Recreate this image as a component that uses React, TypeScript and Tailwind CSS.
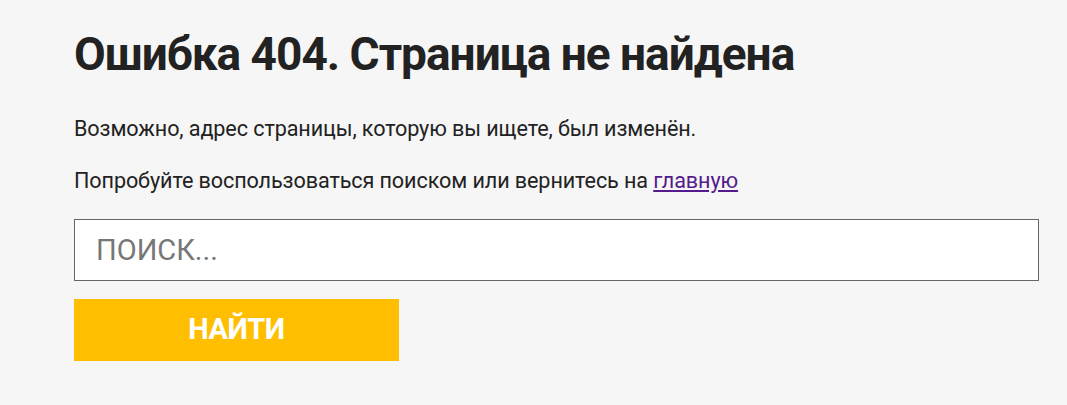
import React from 'react';

const NotFound = () => {
  return (
    <div className="min-h-screen bg-[#f6f6f6] font-['Roboto',sans-serif] text-[#222]">
      <div className="px-[74px] pt-[27px]">
        <h1 className="text-[46px] font-bold leading-[54px] tracking-[-1px]">Ошибка 404. Страница не найдена</h1>
        <p className="mt-[35px] text-[21.6px] leading-[26px] tracking-[-0.1px]">
          Возможно, адрес страницы, которую вы ищете, был изменён.
        </p>
        <p className="mt-[26px] text-[21.6px] leading-[26px] tracking-[-0.1px]">
          Попробуйте воспользоваться поиском или вернитесь на{' '}
          <a href="#" className="text-[#551a8b] underline">главную</a>
        </p>
        <form className="mt-[25px] w-[965px]" onSubmit={(e) => e.preventDefault()}>
          <input
            type="text"
            placeholder="ПОИСК..."
            className="block h-[62px] w-full border border-[#666] bg-white px-[21px] text-[29px] text-[#222] outline-none placeholder:text-[#777]"
          />
          <button
            type="submit"
            className="mt-[18px] block h-[62px] w-[325px] bg-[#ffbf00] text-[29px] font-bold tracking-[-0.5px] text-white"
          >
            НАЙТИ
          </button>
        </form>
      </div>
    </div>
  );
};

export default function App() {
  return <NotFound />;
}
